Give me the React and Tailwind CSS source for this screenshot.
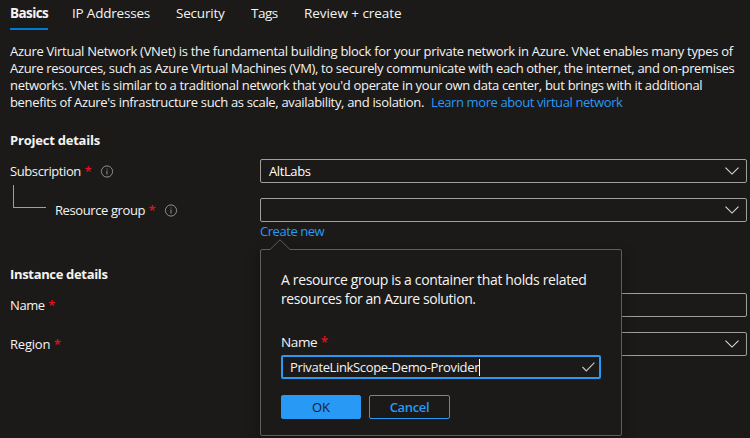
function Star() {
  return <span className="ml-[3.5px] font-semibold tracking-normal text-[#e3101f]">*</span>;
}

function Info() {
  return (
    <svg className="ml-[8px] shrink-0" width="14" height="14" viewBox="0 0 14 14" fill="none" stroke="#8f8e8d">
      <circle cx="7" cy="7.5" r="5.6" />
      <path d="M7 6.5v4M7 4.5v1" />
    </svg>
  );
}

function Chevron() {
  return (
    <svg width="14" height="8" viewBox="0 0 14 8" fill="none" stroke="#dddcdb" strokeWidth="1.1">
      <path d="M0.5 0.7L7 7.1L13.5 0.7" />
    </svg>
  );
}

function Field({ value, select }) {
  return (
    <div className="flex h-6 w-[487px] shrink-0 items-center justify-between rounded-[2px] border border-[#a19f9d] pr-[7px] pl-2">
      <span className="text-white">{value}</span>
      {select && <Chevron />}
    </div>
  );
}

export default function App() {
  return (
    <div className="relative h-[438px] w-[750px] overflow-hidden bg-[#1b1a19] font-['Open_Sans','Noto_Sans',sans-serif] text-[13px] leading-[17px] tracking-[-0.4px] whitespace-nowrap text-[#f5f4f3]">
      <nav className="flex h-[30px] items-start pt-[5px] pl-[10px] text-[13.5px]">
        <div className="h-[25px] w-[38px] border-b-2 border-[#0078d4] font-bold tracking-[-0.6px]">
          <span>Basics</span>
        </div>
        <div className="ml-6 w-[78px] tracking-[-0.2px]">IP Addresses</div>
        <div className="ml-[26px] w-[49px] tracking-[-0.2px]">Security</div>
        <div className="ml-[26px] w-[27px] tracking-[-0.5px]">Tags</div>
        <div className="ml-[26px] tracking-[-0.05px]">Review + create</div>
      </nav>

      <div className="mt-[13px] pl-[10px]">
        <div className="tracking-[-0.28px]"><span>Azure Virtual Network (VNet) is the fundamental building block for your private network in Azure. VNet enables many types of</span></div>
        <div className="tracking-[-0.34px]"><span>Azure resources, such as Azure Virtual Machines (VM), to securely communicate with each other, the internet, and on-premises</span></div>
        <div className="tracking-[-0.31px]"><span>networks. VNet is similar to a traditional network that you'd operate in your own data center, but brings with it additional</span></div>
        <div className="flex tracking-[-0.33px]">
          <span className="w-[421px]">benefits of Azure's infrastructure such as scale, availability, and isolation.</span>
          <a className="tracking-[-0.4px] text-[#2899f5]">Learn more about virtual network</a>
        </div>
      </div>

      <h2 className="mt-[21px] pl-[10px] font-bold tracking-[-0.22px]">Project details</h2>
      <div className="mt-[10px] flex h-6 items-center pl-[10px]">
        <div className="flex w-[250px] items-center">Subscription<Star /><Info /></div>
        <Field value="AltLabs" select />
      </div>
      <div className="mt-[15px] flex h-6 items-center pl-[13px]">
        <div className="mt-[-27px] h-[23px] w-[33px] shrink-0 border-b border-l border-[#a19f9d]" />
        <div className="ml-[9px] flex w-[205px] items-center">Resource group<Star /><Info /></div>
        <Field select />
      </div>
      <div className="mt-[1px] pl-[260px] tracking-[-0.45px] text-[#2899f5]">Create new</div>

      <h2 className="mt-[26px] pl-[10px] font-bold tracking-[-0.33px]">Instance details</h2>
      <div className="mt-[10px] flex h-6 items-center pl-[10px]">
        <div className="w-[250px]">Name<Star /></div>
        <Field />
      </div>
      <div className="mt-[15px] flex h-6 items-center pl-[10px]">
        <div className="w-[250px] tracking-[-0.2px]">Region<Star /></div>
        <Field select />
      </div>

      <section className="absolute top-[249px] left-[260px] h-[187px] w-[362px] rounded-[2px] border border-[#605e5c] bg-[#1b1a19] pt-[20px] pl-5 tracking-[-0.35px] shadow-[0_4px_14px_rgba(0,0,0,0.3)]">
        <svg className="absolute top-[-11px] left-[8px]" width="22" height="12" viewBox="0 0 22 12">
          <path d="M1 12V10.5L11 .8L21 10.5V12Z" fill="#1b1a19" />
          <path d="M1 10.5L11 .8L21 10.5" fill="none" stroke="#605e5c" />
        </svg>
        <p className="text-[14px] leading-[19px]"><span>A resource group is a container that holds related</span><br /><span className="tracking-[-0.42px]">resources for an Azure solution.</span></p>
        <label className="mt-[26px] block text-[13.5px]">Name<Star /></label>
        <div className="mt-[4px] flex h-6 w-[320px] items-center rounded-[2px] border-2 border-[#2899f5] pr-1 pl-[7px]">
          <span>PrivateLinkScope-Demo-Provider</span>
          <span className="h-[17px] w-px bg-white" />
          <svg className="ml-auto" width="13" height="10" viewBox="0 0 13 10" fill="none" stroke="#c8c6c4" strokeWidth="1.2">
            <path d="M.5 5L4.3 8.8L12.4.7" />
          </svg>
        </div>
        <div className="mt-4 flex gap-2 text-center leading-[22px]">
          <button className="h-6 w-20 rounded-[2px] border border-[#2899f5] bg-[#2899f5] tracking-normal text-[#1b1a19]">OK</button>
          <button className="h-6 w-[81px] rounded-[2px] border border-[#2899f5] font-semibold text-[#2899f5]">Cancel</button>
        </div>
      </section>
    </div>
  );
}
